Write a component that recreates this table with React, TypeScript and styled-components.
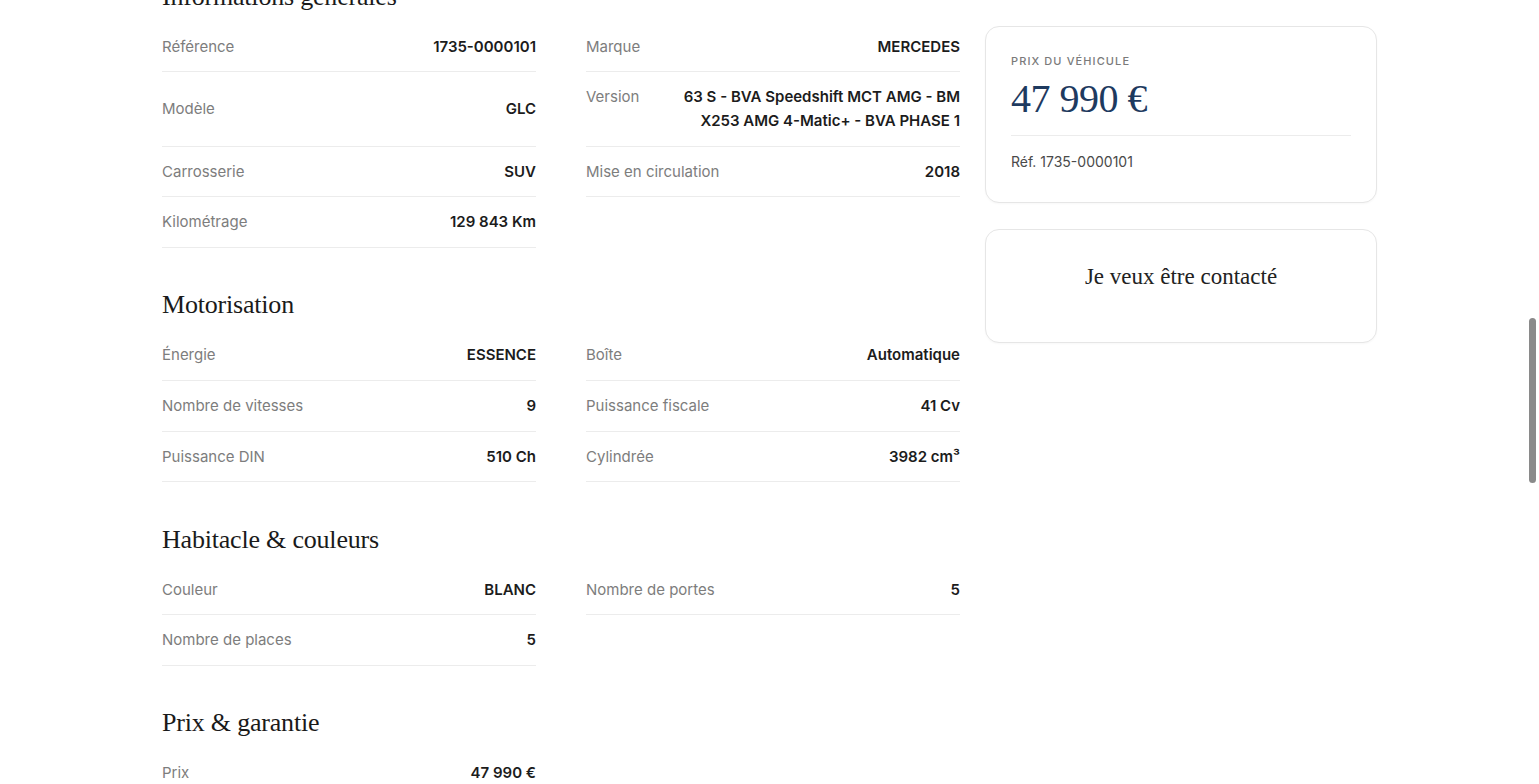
import React from "react";
import styled, { createGlobalStyle } from "styled-components";

const GlobalStyle = createGlobalStyle`
  html, body {
    margin: 0;
    padding: 0;
    background: #ffffff;
    height: 100%;
    overflow: hidden;
  }
  body {
    font-family: Inter, "Liberation Sans", sans-serif;
    color: #1c1c1c;
  }
  * { box-sizing: border-box; }
`;

const Viewport = styled.div`
  position: relative;
  height: 100vh;
  overflow: hidden;
`;

const Layout = styled.div`
  width: 1215px;
  margin: 0 auto;
  display: grid;
  grid-template-columns: 1fr 392px;
  column-gap: 25px;
  align-items: start;
`;

const Main = styled.main`
  margin-top: -19.5px;
  display: flex;
  flex-direction: column;
  gap: 41.5px;
`;

const Section = styled.section`
  display: flex;
  flex-direction: column;
  gap: 9px;
`;

const SectionTitle = styled.h2`
  margin: 0;
  font-family: "Liberation Serif", "DejaVu Serif", serif;
  font-weight: 400;
  font-size: 26px;
  line-height: 32px;
  color: #1a1a1a;
  letter-spacing: -0.2px;
`;

const Grid = styled.div`
  display: grid;
  grid-template-columns: 1fr 1fr;
  column-gap: 50px;
`;

const Row = styled.div`
  display: flex;
  justify-content: space-between;
  align-items: center;
  gap: 24px;
  padding: 13px 0 12.6px;
  border-bottom: 1px solid #ececec;
  font-size: 15px;
  line-height: 24px;
`;

const Label = styled.span<{ $top?: boolean }>`
  color: #7d7d7d;
  white-space: nowrap;
  align-self: ${(p) => (p.$top ? "flex-start" : "center")};
`;

const Value = styled.span`
  color: #1c1c1c;
  font-weight: 600;
  text-align: right;
  max-width: 300px;
`;

const Sidebar = styled.aside`
  margin-top: 26px;
  display: flex;
  flex-direction: column;
  gap: 26px;
`;

const Card = styled.div`
  border: 1px solid #e6e6e6;
  border-radius: 14px;
  background: #fff;
  box-shadow: 0 1px 2px rgba(0, 0, 0, 0.03);
`;

const PriceCard = styled(Card)`
  padding: 26px 25px 30px;
`;

const Eyebrow = styled.div`
  font-size: 11px;
  line-height: 16px;
  letter-spacing: 1.1px;
  text-transform: uppercase;
  color: #7a7a7a;
  font-weight: 500;
`;

const Price = styled.div`
  margin-top: 8px;
  font-family: "Liberation Serif", "DejaVu Serif", serif;
  font-size: 40px;
  line-height: 44px;
  color: #1e3a5f;
  letter-spacing: -0.5px;
`;

const Divider = styled.hr`
  margin: 14px 0 16px;
  border: 0;
  border-top: 1px solid #ececec;
`;

const RefText = styled.div`
  font-size: 14px;
  line-height: 20px;
  color: #4a4a4a;
`;

const ContactCard = styled(Card)`
  padding: 32px 26px 50px;
  text-align: center;
`;

const ContactTitle = styled.h3`
  margin: 0;
  font-family: "Liberation Serif", "DejaVu Serif", serif;
  font-weight: 400;
  font-size: 23px;
  line-height: 30px;
  color: #222;
`;

const ScrollThumb = styled.div`
  position: absolute;
  right: 3px;
  top: 318px;
  width: 7px;
  height: 165px;
  border-radius: 4px;
  background: #8a8a8a;
`;

type Item = { label: string; value: string; top?: boolean };

const sections: { title: string; rows: Item[] }[] = [
  {
    title: "Informations générales",
    rows: [
      { label: "Référence", value: "1735-0000101" },
      { label: "Marque", value: "MERCEDES" },
      { label: "Modèle", value: "GLC" },
      {
        label: "Version",
        value: "63 S - BVA Speedshift MCT AMG - BM X253 AMG 4-Matic+ - BVA PHASE 1",
        top: true,
      },
      { label: "Carrosserie", value: "SUV" },
      { label: "Mise en circulation", value: "2018" },
      { label: "Kilométrage", value: "129 843 Km" },
    ],
  },
  {
    title: "Motorisation",
    rows: [
      { label: "Énergie", value: "ESSENCE" },
      { label: "Boîte", value: "Automatique" },
      { label: "Nombre de vitesses", value: "9" },
      { label: "Puissance fiscale", value: "41 Cv" },
      { label: "Puissance DIN", value: "510 Ch" },
      { label: "Cylindrée", value: "3982 cm³" },
    ],
  },
  {
    title: "Habitacle & couleurs",
    rows: [
      { label: "Couleur", value: "BLANC" },
      { label: "Nombre de portes", value: "5" },
      { label: "Nombre de places", value: "5" },
    ],
  },
  {
    title: "Prix & garantie",
    rows: [{ label: "Prix", value: "47 990 €" }],
  },
];

export default function App() {
  return (
    <>
      <GlobalStyle />
      <Viewport>
        <Layout>
          <Main>
            {sections.map((s) => (
              <Section key={s.title}>
                <SectionTitle>{s.title}</SectionTitle>
                <Grid>
                  {s.rows.map((r) => (
                    <Row key={r.label}>
                      <Label $top={r.top}>{r.label}</Label>
                      <Value>{r.value}</Value>
                    </Row>
                  ))}
                </Grid>
              </Section>
            ))}
          </Main>
          <Sidebar>
            <PriceCard>
              <Eyebrow>Prix du véhicule</Eyebrow>
              <Price>47 990 €</Price>
              <Divider />
              <RefText>Réf. 1735-0000101</RefText>
            </PriceCard>
            <ContactCard>
              <ContactTitle>Je veux être contacté</ContactTitle>
            </ContactCard>
          </Sidebar>
        </Layout>
        <ScrollThumb />
      </Viewport>
    </>
  );
}
